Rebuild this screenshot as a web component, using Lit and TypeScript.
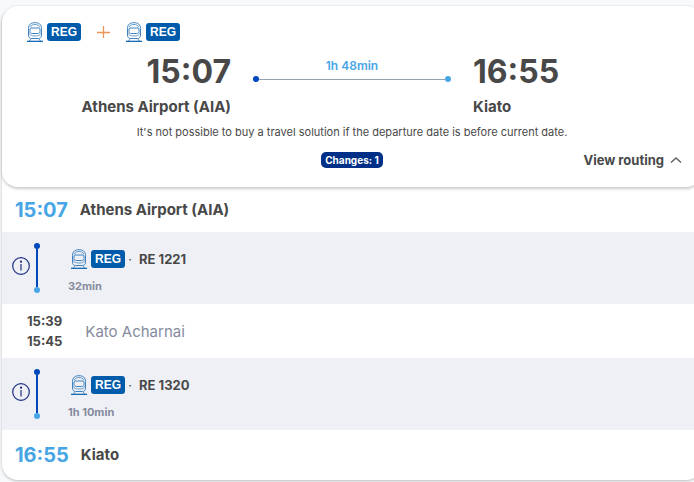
import { LitElement, html, css } from "lit";
import { customElement, property } from "lit/decorators.js";

@customElement("train-tag")
class TrainTag extends LitElement {
  static styles = css`
    :host {
      display: inline-flex;
      align-items: center;
      gap: 4px;
    }
    .train {
      display: block;
      width: 16px;
      height: 20px;
    }
    .code {
      padding: 0 4px;
      border-radius: 3px;
      background: #005cab;
      color: #fff;
      font: bold 12px/18px "Liberation Sans", Arial, sans-serif;
    }
  `;

  render() {
    return html`
      <svg class="train" viewBox="0 0 16 20" fill="none" stroke="#3d82bf" stroke-width="1" aria-hidden="true">
        <path d="M1.500 13V6.500C1.500 2.500 4 .7 8 .7s6.500 1.800 6.500 5.800V13c0 2-1 3.500-3 3.500h-7c-2 0-3-1.500-3-3.500z" />
        <path d="M3.500 5C4 3.300 5.500 2.500 8 2.500s4 .8 4.500 2.500" stroke-width=".8" />
        <path d="M4 6h8c.8 0 1 .4 1 1v2.500c0 1.300-1 2-2.200 2H5.200C4 11.500 3 10.800 3 9.500V7c0-.6.200-1 1-1z" />
        <path d="M1.500 9.500C2 13 4.500 14 8 14s6-1 6.500-4.500" stroke-width=".8" />
        <path d="M4 17l-1.500 2M12 17l1.500 2" stroke-width=".8" />
        <path d="M0 19.300h16" stroke="#005cab" stroke-width="1.200" />
      </svg>
      <span class="code">REG</span>
    `;
  }
}

@customElement("route-leg")
class RouteLeg extends LitElement {
  @property() train = "";
  @property() duration = "";

  static styles = css`
    :host {
      display: flex;
      align-items: center;
      padding: 0 10px;
      background: #eff0f6;
    }
    .info {
      padding: 0 0 4px;
      border: 0;
      background: none;
      cursor: pointer;
    }
    .info svg {
      display: block;
      width: 18px;
      height: 18px;
    }
    .track {
      display: flex;
      flex-direction: column;
      align-items: center;
      width: 6px;
      margin: 0 28px 0 4px;
    }
    .dot {
      width: 6px;
      height: 6px;
      border-radius: 50%;
      background: #0047bb;
    }
    .dot.end {
      background: #47a5e5;
    }
    .line {
      width: 2px;
      height: 38px;
      background: #0047bb;
    }
    .text {
      padding: 13px 0 5px;
    }
    .name {
      display: flex;
      align-items: center;
      height: 28px;
      padding-left: 3px;
      font-size: 13px;
      font-weight: 700;
    }
    .sep {
      width: 10px;
      margin-right: 4px;
      text-align: center;
      font-weight: 400;
    }
    .duration {
      font-size: 11px;
      line-height: 26px;
      font-weight: 700;
      color: #858b9d;
    }
  `;

  render() {
    return html`
      <button class="info" aria-label="Information about ${this.train}">
        <svg viewBox="0 0 18 18" fill="none" stroke="#1c2f83" stroke-width="1.200">
          <circle cx="9" cy="9" r="8.300" />
          <path d="M9 7v6.500" />
          <circle cx="9" cy="4.700" r=".5" fill="#1c2f83" />
        </svg>
      </button>
      <div class="track">
        <span class="dot"></span><span class="line"></span><span class="dot end"></span>
      </div>
      <div class="text">
        <div class="name"><train-tag></train-tag><span class="sep">·</span><span>${this.train}</span></div>
        <div class="duration">${this.duration}</div>
      </div>
    `;
  }
}

@customElement("app-root")
class AppRoot extends LitElement {
  static styles = css`
    :host {
      display: block;
      box-sizing: border-box;
      min-height: 100vh;
      padding: 6px 0 2px 2px;
      overflow: hidden;
      background: #f8f9fb;
      color: #484848;
      font-family: Inter, sans-serif;
      font-optical-sizing: none;
    }
    .solution {
      margin-right: -8px;
      border-radius: 16px;
      background: #fff;
      box-shadow: 0 1px 3px rgba(0, 0, 0, 0.25);
    }
    .summary {
      padding: 16px 20px;
      border-radius: 16px;
      box-shadow: 0 2px 3px rgba(0, 0, 0, 0.2);
    }
    .trains {
      display: flex;
      align-items: center;
      gap: 15px;
      height: 20px;
      padding-left: 5px;
    }
    .plus {
      display: block;
      width: 15px;
      height: 14px;
    }
    .journey {
      display: grid;
      grid-template-columns: 1fr 198px 1fr;
      column-gap: 22px;
    }
    .from {
      text-align: right;
    }
    .time {
      margin-top: 10px;
      font-size: 32px;
      line-height: 40px;
      font-weight: 700;
    }
    .place {
      font-size: 15px;
      line-height: 20px;
      font-weight: 700;
    }
    .journey .place {
      margin-top: 5px;
    }
    .span {
      padding-top: 14px;
      text-align: center;
      font-size: 12px;
      line-height: 20px;
      font-weight: 600;
      color: #47a5e5;
    }
    .rail {
      display: flex;
      align-items: center;
    }
    .dot {
      width: 6px;
      height: 6px;
      border-radius: 50%;
      background: #0047bb;
    }
    .dot.end {
      background: #47a5e5;
    }
    .line {
      flex: 1;
      height: 1px;
      background: #93a1b3;
    }
    .notice {
      margin: 6px 0 7px;
      text-align: center;
      font-size: 11px;
      line-height: 18px;
    }
    .foot {
      display: grid;
      grid-template-columns: 1fr auto 1fr;
      align-items: center;
      height: 23px;
    }
    .changes {
      grid-column: 2;
      padding: 0 4px;
      border-radius: 5px;
      background: #002f87;
      color: #fff;
      font-size: 10px;
      line-height: 16px;
      font-weight: 700;
    }
    .toggle {
      display: flex;
      align-items: center;
      justify-self: end;
      gap: 6px;
      padding: 0;
      border: 0;
      background: none;
      color: inherit;
      font: 700 13px/20px Inter, sans-serif;
      cursor: pointer;
    }
    .toggle svg {
      display: block;
      width: 12px;
      height: 8px;
    }
    .stop {
      display: flex;
      align-items: center;
      gap: 12px;
      height: 45px;
      padding-left: 13px;
    }
    .stop.last {
      height: 50px;
    }
    .hour {
      font-size: 20px;
      font-weight: 700;
      color: #47a5e5;
    }
    .transfer {
      display: flex;
      align-items: center;
      gap: 23px;
      height: 54px;
      padding-left: 25px;
    }
    .hours {
      font-size: 13px;
      line-height: 20px;
      font-weight: 700;
    }
    .via {
      font-size: 15px;
      color: #858b9d;
    }
  `;

  render() {
    return html`
      <main class="solution">
        <section class="summary">
          <div class="trains">
            <train-tag></train-tag>
            <svg class="plus" viewBox="0 0 15 14" stroke="#ee9457" stroke-width="1.300" aria-hidden="true">
              <path d="M7.500 1v12M1 7.500h13" />
            </svg>
            <train-tag></train-tag>
          </div>
          <div class="journey">
            <div class="from">
              <div class="time">15:07</div>
              <div class="place">Athens Airport (AIA)</div>
            </div>
            <div class="span">
              <div>1h 48min</div>
              <div class="rail"><span class="dot"></span><span class="line"></span><span class="dot end"></span></div>
            </div>
            <div>
              <div class="time">16:55</div>
              <div class="place">Kiato</div>
            </div>
          </div>
          <p class="notice">It's not possible to buy a travel solution if the departure date is before current date.</p>
          <div class="foot">
            <span class="changes">Changes: 1</span>
            <button class="toggle" aria-expanded="true">
              View routing
              <svg viewBox="0 0 12 8" fill="none" stroke="#666" stroke-width="1.600" aria-hidden="true">
                <path d="M1 6.500l5-4.500 5 4.500" />
              </svg>
            </button>
          </div>
        </section>
        <section>
          <div class="stop"><span class="hour">15:07</span><span class="place">Athens Airport (AIA)</span></div>
          <route-leg train="RE 1221" duration="32min"></route-leg>
          <div class="transfer">
            <div class="hours"><div>15:39</div><div>15:45</div></div>
            <span class="via">Kato Acharnai</span>
          </div>
          <route-leg train="RE 1320" duration="1h 10min"></route-leg>
          <div class="stop last"><span class="hour">16:55</span><span class="place">Kiato</span></div>
        </section>
      </main>
    `;
  }
}
